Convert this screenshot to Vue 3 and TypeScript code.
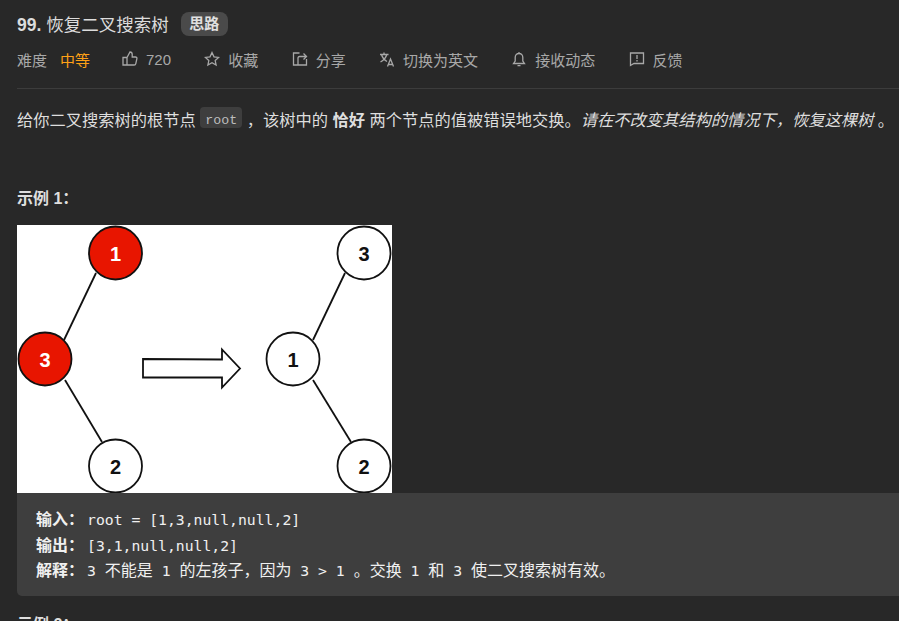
<template>
  <div class="page">
    <div class="title_row">
      <h1 class="title"><span class="number">99.</span> 恢复二叉搜索树</h1>
      <span class="tag">思路</span>
    </div>

    <div class="meta_row">
      <span class="meta_item">难度</span>
      <span class="level">中等</span>
      <span v-for="item in metaItems" :key="item.label" class="meta_item">
        <svg class="meta_icon" viewBox="0 0 16 16" fill="none" stroke="currentColor" stroke-width="1.300">
          <path :d="item.icon" />
        </svg>
        {{ item.label }}
      </span>
    </div>

    <p class="intro">
      给你二叉搜索树的根节点 <code class="inline_code">root</code> ，该树中的 <strong>恰好</strong> 两个节点的值被错误地交换。<em>请在不改变其结构的情况下，恢复这棵树</em> 。
    </p>

    <p class="example_title">示例 1：</p>

    <svg class="tree" viewBox="0 0 375 268">
      <rect width="375" height="268" fill="#fff" />
      <line v-for="(edge, i) in edges" :key="i" :x1="edge[0]" :y1="edge[1]" :x2="edge[2]" :y2="edge[3]" class="edge" />
      <polygon class="arrow" points="126,134 205,134.500 205,124.500 223,143.500 205,162.500 205,152.500 126,152.500" />
      <g v-for="node in nodes" :key="node.x + '-' + node.y">
        <circle :cx="node.x" :cy="node.y" r="26.500" :fill="node.red ? '#e81500' : '#fff'" class="node" />
        <text :x="node.x" :y="node.y + 7.500" :fill="node.red ? '#fff' : '#111'" class="node_text">{{ node.text }}</text>
      </g>
    </svg>

    <pre class="code_block"><strong>输入：</strong><span class="mono">root = [1,3,null,null,2]</span>
<strong>输出：</strong><span class="mono">[3,1,null,null,2]</span>
<strong>解释：</strong><span class="mono">3 </span>不能是<span class="mono"> 1 </span>的左孩子，因为<span class="mono"> 3 &gt; 1 </span>。交换<span class="mono"> 1 </span>和<span class="mono"> 3 </span>使二叉搜索树有效。</pre>

    <p class="example_title next">示例 2：</p>
  </div>
</template>

<script setup lang="ts">
const metaItems = [
  {
    label: "720",
    icon: "M5 6.500v7.500H1v-7.500h4zM5 6.500l3-5.500c1.400 0 2.200 1 2.200 2.300V6h3.300c1 0 1.600.7 1.400 1.600l-1.100 5c-.2.900-.8 1.400-1.600 1.400H5",
  },
  {
    label: "收藏",
    icon: "M8 1.500l2 4.300 4.600.6-3.400 3.100.9 4.600L8 11.800l-4.100 2.300.9-4.600L1.400 6.400 6 5.800z",
  },
  {
    label: "分享",
    icon: "M7.500 2H1.500v12h13V8M6 14V7c0-1 .5-1.500 1.500-1.500h6.500M11.500 2.500L14.500 5.500l-3 3",
  },
  {
    label: "切换为英文",
    icon: "M1 3.500h8.500M5 1.500v2M2.500 3.500c.8 3 2.800 5.500 5.500 7M7.800 3.500C7 6.500 4.800 9.200 1.500 11M8.500 15.500l3-7.500 3 7.500M9.500 13.500h4",
  },
  {
    label: "接收动态",
    icon: "M8 2.500c-2.500 0-3.800 1.800-3.800 3.900V10l-1.700 2.500h11L11.800 10V6.400c0-2.100-1.300-3.900-3.800-3.900zM8 1v1.500M6.500 14.700h3",
  },
  {
    label: "反馈",
    icon: "M1.500 2h13v10.500H5L1.500 14.500zM8 4v4M8 9v1.500",
  },
];

const edges = [
  [79, 48, 47, 115],
  [48, 155, 85, 217],
  [328, 48, 296, 115],
  [296, 155, 334, 217],
];

const nodes = [
  { x: 98.500, y: 28, text: "1", red: true },
  { x: 28, y: 134, text: "3", red: true },
  { x: 98.500, y: 241, text: "2", red: false },
  { x: 347, y: 28, text: "3", red: false },
  { x: 276, y: 134, text: "1", red: false },
  { x: 347, y: 241, text: "2", red: false },
];
</script>

<style>
html,
body {
  margin: 0;
  height: 100%;
  overflow: hidden;
  background: #282828;
}
</style>

<style scoped>
.page {
  height: 621px;
  overflow: hidden;
  box-sizing: border-box;
  padding: 12px 0 0 17px;
  background: #282828;
  color: #dedede;
  font-family: "Liberation Sans", "Noto Sans CJK SC", sans-serif;
  font-size: 16px;
}
.title_row {
  display: flex;
  align-items: center;
  gap: 12px;
  height: 24px;
}
.title {
  margin: 0 0 2px;
  font-size: 17.500px;
  font-weight: 400;
  color: #dcdcdc;
}
.number {
  font-weight: 700;
}
.tag {
  display: block;
  width: 47px;
  height: 24px;
  line-height: 23px;
  text-align: center;
  border-radius: 8px;
  background: #4a4a4a;
  color: #e0e0e0;
  font-size: 15px;
  font-weight: 700;
}
.meta_row {
  display: flex;
  align-items: center;
  gap: 33.300px;
  box-sizing: border-box;
  height: 53px;
  padding-bottom: 6px;
  border-bottom: 1px solid #3c3c3c;
  font-size: 15px;
  color: #a8a8a8;
}
.meta_item {
  display: flex;
  align-items: center;
  gap: 8px;
}
.level {
  margin: 0 -1.300px 0 -20.300px;
  color: #ffa116;
}
.meta_icon {
  width: 16px;
  height: 16px;
}
.intro {
  margin: 19px 0 0;
  font-size: 16.250px;
  line-height: 25px;
  white-space: nowrap;
}
.inline_code {
  padding: 6px 5px 0;
  border-radius: 4px;
  background: #3e3e3e;
  color: #bdbdbd;
  font-family: "Liberation Mono", monospace;
  font-size: 13.300px;
  line-height: 1;
  vertical-align: 2px;
}
.intro strong {
  font-weight: 700;
}
.example_title {
  margin: 53px 0 0;
  line-height: 25px;
  font-weight: 700;
}
.tree {
  display: block;
  width: 375px;
  height: 268px;
  margin-top: 14px;
}
.edge {
  stroke: #111;
  stroke-width: 1.800;
}
.arrow {
  fill: #fff;
  stroke: #111;
  stroke-width: 1.800;
}
.node {
  stroke: #111;
  stroke-width: 1.800;
}
.node_text {
  font-family: "Liberation Sans", sans-serif;
  font-size: 20px;
  font-weight: 700;
  text-anchor: middle;
}
.code_block {
  margin: 0;
  padding: 13px 19px;
  border-radius: 0 0 0 5px;
  background: #3e3e3e;
  color: #f0f0f0;
  font-family: "Noto Sans CJK SC", sans-serif;
  font-size: 16px;
  line-height: 25.500px;
}
.code_block strong {
  margin-right: 3px;
  line-height: 1;
}
.mono {
  font-family: "DejaVu Sans Mono", monospace;
  font-size: 14.750px;
  line-height: 1;
}
.next {
  margin-top: 16px;
}
</style>
